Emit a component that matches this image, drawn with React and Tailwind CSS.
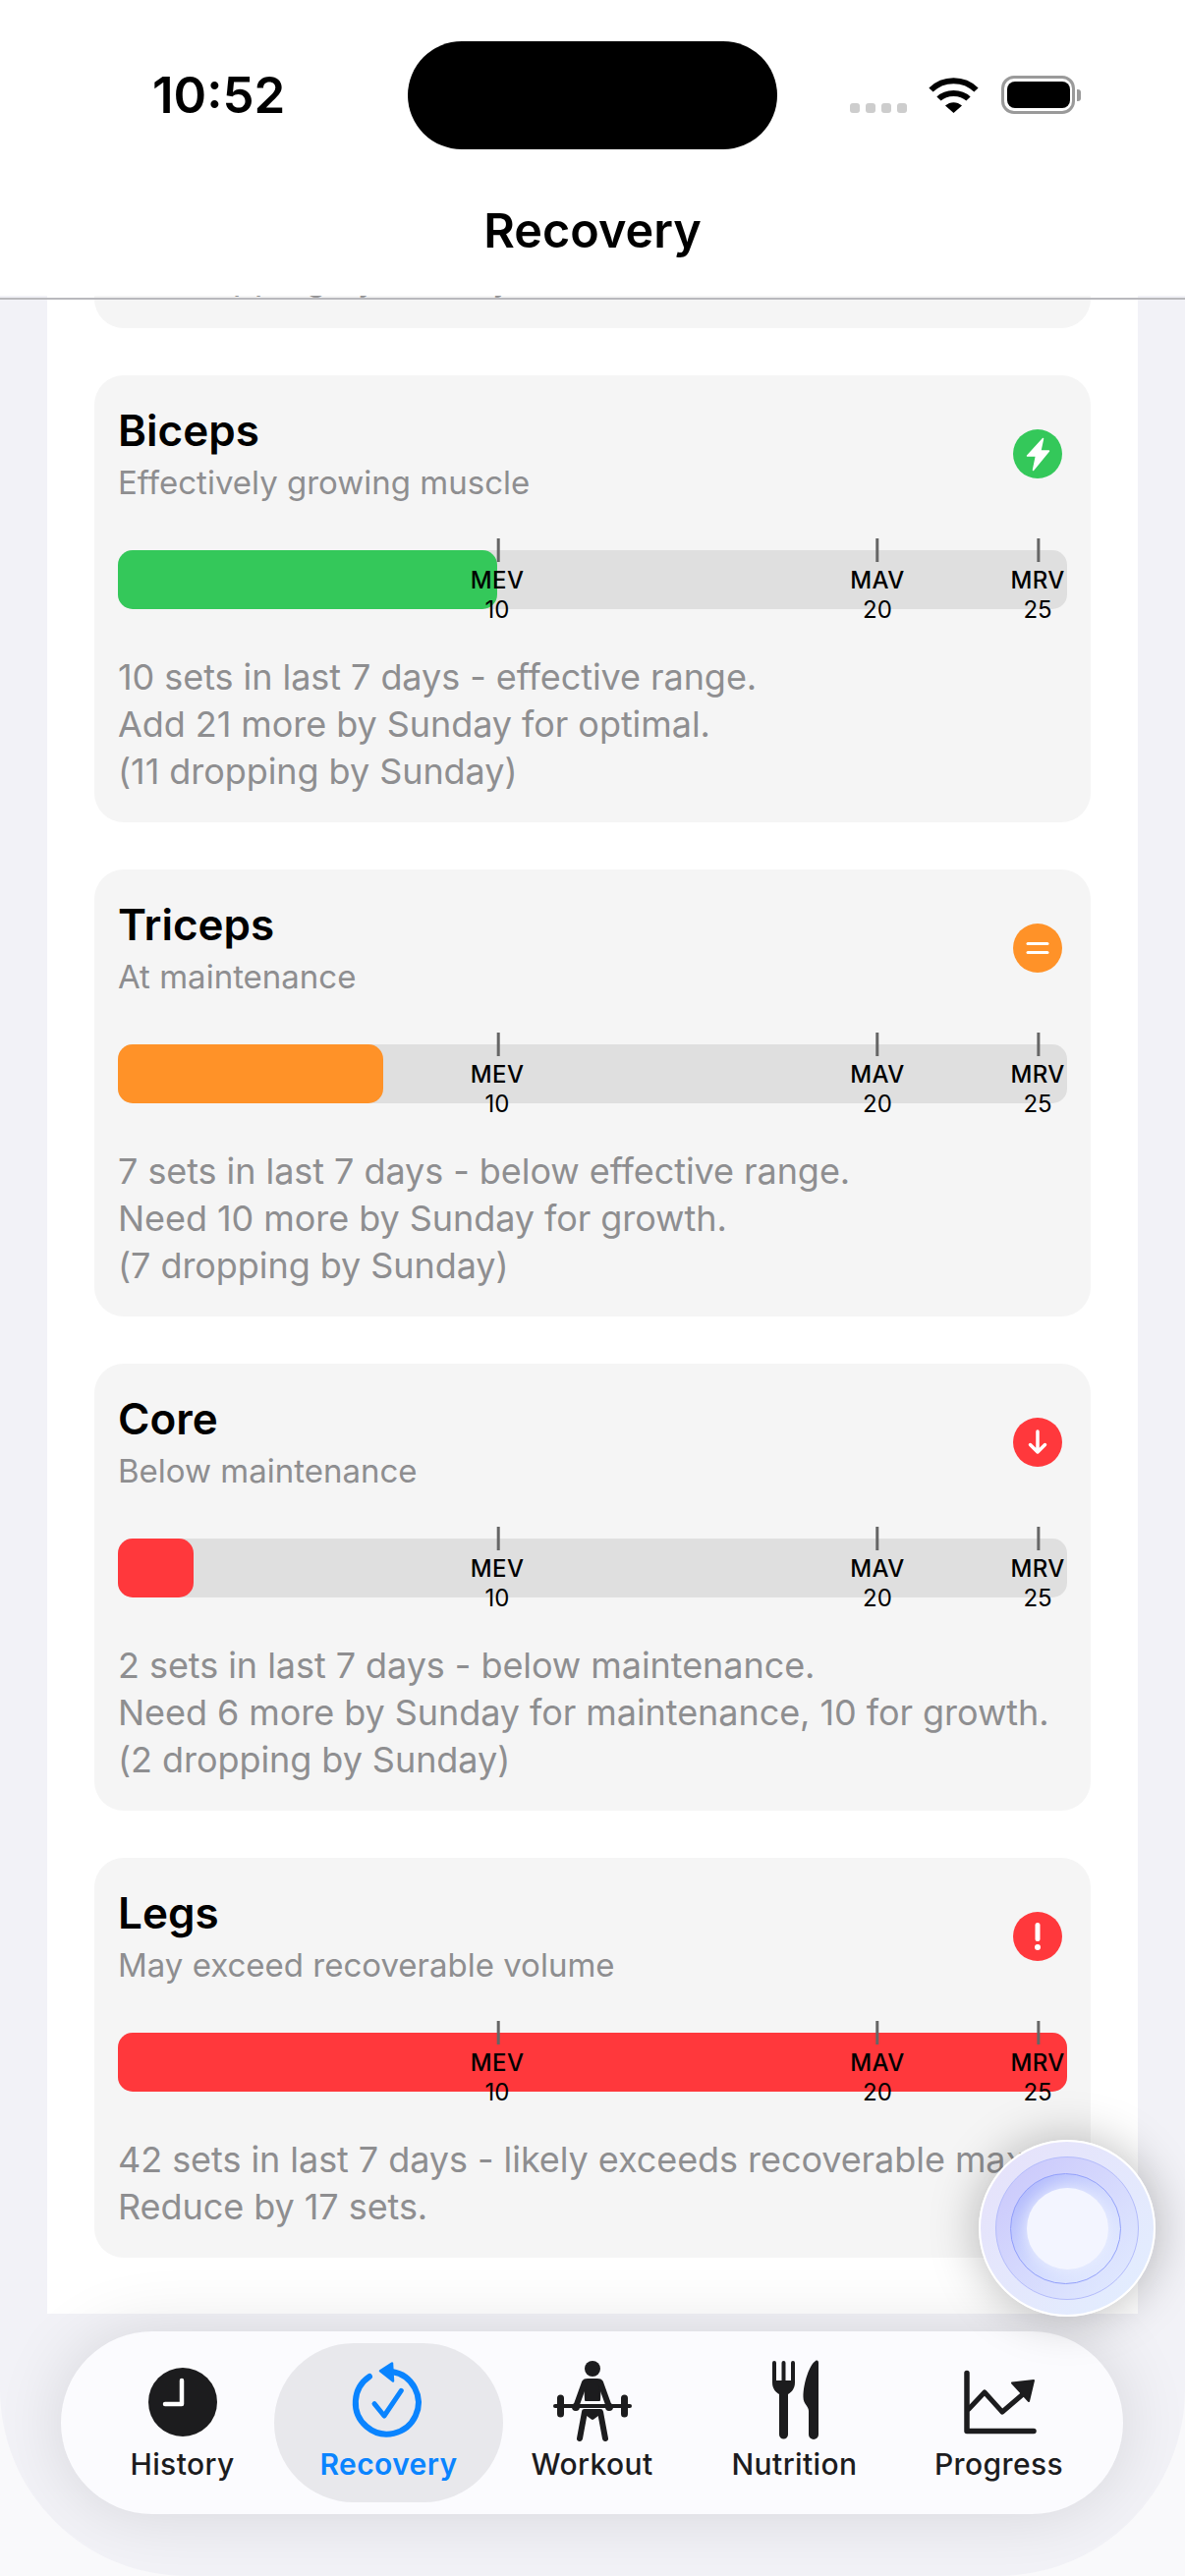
import React from 'react';

const font = 'font-["Inter","Liberation_Sans",sans-serif]';

const muscles = [
  {
    name: 'Shoulders',
    status: 'Effectively growing muscle',
    lines: ['12 sets in last 7 days - effective range.', 'Add 19 more by Sunday for optimal.', '(10 dropping by Sunday)'],
    fill: 'w-[463px] bg-[#34c85a]',
    icon: 'bolt',
    badge: 'bg-[#34c85a]',
  },
  {
    name: 'Biceps',
    status: 'Effectively growing muscle',
    lines: ['10 sets in last 7 days - effective range.', 'Add 21 more by Sunday for optimal.', '(11 dropping by Sunday)'],
    fill: 'w-[386px] bg-[#34c85a]',
    icon: 'bolt',
    badge: 'bg-[#34c85a]',
  },
  {
    name: 'Triceps',
    status: 'At maintenance',
    lines: ['7 sets in last 7 days - below effective range.', 'Need 10 more by Sunday for growth.', '(7 dropping by Sunday)'],
    fill: 'w-[270px] bg-[#ff9228]',
    icon: 'equal',
    badge: 'bg-[#ff9228]',
  },
  {
    name: 'Core',
    status: 'Below maintenance',
    lines: ['2 sets in last 7 days - below maintenance.', 'Need 6 more by Sunday for maintenance, 10 for growth.', '(2 dropping by Sunday)'],
    fill: 'w-[77px] bg-[#ff383c]',
    icon: 'down',
    badge: 'bg-[#ff383c]',
  },
  {
    name: 'Legs',
    status: 'May exceed recoverable volume',
    lines: ['42 sets in last 7 days - likely exceeds recoverable max.', 'Reduce by 17 sets.'],
    fill: 'w-full bg-[#ff383c]',
    icon: 'alert',
    badge: 'bg-[#ff383c]',
  },
];

// MEV and MRV labels sit a little left of their tick
const markers = [
  { label: 'MEV', value: 10, pos: 'left-[386px]', tick: 'translate-x-[1px]' },
  { label: 'MAV', value: 20, pos: 'left-[773px]', tick: '' },
  { label: 'MRV', value: 25, pos: 'left-[936px]', tick: 'translate-x-[1px]' },
];

function BadgeIcon({ type }) {
  return (
    <svg width="50" height="50" viewBox="0 0 50 50" fill="none" stroke="white" strokeLinecap="round" strokeLinejoin="round">
      {type === 'bolt' && <path d="M30.5 9.5 14.5 27h9l-3 14.5L36.5 22h-8.7z" fill="white" strokeWidth="1.5" />}
      {type === 'equal' && (
        <>
          <path d="M15 20.5h20" strokeWidth="3" />
          <path d="M15 29.5h20" strokeWidth="3" />
        </>
      )}
      {type === 'down' && <path d="M25 14v21M17.5 27.5 25 35l7.5-7.5" strokeWidth="3.5" />}
      {type === 'alert' && (
        <>
          <path d="M25 13.5v14" strokeWidth="5" />
          <circle cx="25" cy="36" r="3" fill="white" stroke="none" />
        </>
      )}
    </svg>
  );
}

function MuscleCard({ muscle }) {
  return (
    <div className="rounded-[30px] bg-[#f5f5f5] px-[24px] pt-[29px] pb-[28px]">
      <div className="flex items-start justify-between">
        <div>
          <div className="text-[44px] leading-[54px] font-semibold text-black">{muscle.name}</div>
          <div className="mt-[4px] text-[33px] leading-[44px] text-[#8e8e90]">{muscle.status}</div>
        </div>
        <div className={`mt-[26px] mr-[5px] flex h-[50px] w-[50px] items-center justify-center rounded-full ${muscle.badge}`}>
          <BadgeIcon type={muscle.icon} />
        </div>
      </div>
      <div className="relative mt-[47px] h-[60px] rounded-[15px] bg-[#dfdfdf]">
        <div className={`h-full rounded-[15px] ${muscle.fill}`} />
        {markers.map((m) => (
          <div key={m.label} className={`absolute top-[-12px] flex -translate-x-1/2 flex-col items-center ${m.pos}`}>
            <div className={`h-[24px] w-[3px] bg-[#666] ${m.tick}`} />
            <div className="mt-[4px] text-[24px] leading-[30px] font-medium tracking-[0.4px] text-black">{m.label}</div>
            <div className="text-[24px] leading-[30px] text-black">{m.value}</div>
          </div>
        ))}
      </div>
      <div className="mt-[45px] text-[36px] leading-[48px] tracking-[-0.06px] whitespace-nowrap text-[#8e8e90]">
        {muscle.lines.map((l) => (
          <div key={l}>{l}</div>
        ))}
      </div>
    </div>
  );
}

function ClockIcon() {
  return (
    <svg width="110" height="100" viewBox="0 0 110 100">
      <circle cx="55" cy="50" r="35" fill="#1c1c1e" />
      <path d="M54 28v24H37" fill="none" stroke="white" strokeWidth="4.5" strokeLinecap="round" strokeLinejoin="round" />
    </svg>
  );
}

function RecoveryIcon() {
  return (
    <svg width="110" height="100" viewBox="0 0 110 100" fill="none" stroke="#0a84ff" strokeLinecap="round" strokeLinejoin="round">
      <path d="M58 19A32 32 0 1 1 35 24" strokeWidth="6" />
      <path d="M46 18.3 58 10.5 59 28.5z" fill="#0a84ff" strokeWidth="2.5" />
      <path d="M40 51.7 50 64 67.3 38.3" strokeWidth="5" />
    </svg>
  );
}

function WorkoutIcon() {
  return (
    <svg width="110" height="100" viewBox="0 0 110 100" fill="none" stroke="#1c1c1e" strokeLinecap="round" strokeLinejoin="round">
      <circle cx="55" cy="16" r="8" fill="#1c1c1e" stroke="none" />
      <path d="M47 27.5Q48 27 50 27H60Q62 27 63 27.5L62 48H48z" fill="#1c1c1e" strokeWidth="2" />
      <path d="M47 30 38 55M63 30l9 25" strokeWidth="6" />
      <path d="M44 54H66" stroke="#fbfbff" strokeWidth="10" strokeLinecap="butt" />
      <path d="M17 54H93" strokeWidth="4" />
      <path d="M22.5 46V62M87.5 46V62" strokeWidth="7" />
      <path d="M38 55h0M72 55h0" strokeWidth="8" />
      <path d="M47 60H63L68 87M47 60 42 87" strokeWidth="6" />
      <path d="M47 60H63L55 66z" fill="#1c1c1e" strokeWidth="4" />
    </svg>
  );
}

function NutritionIcon() {
  return (
    <svg width="110" height="100" viewBox="0 0 110 100" fill="#1c1c1e">
      <path d="M32 10a2 2 0 0 1 4 0V28h5.5V10a2 2 0 0 1 4 0V28H51V10a2 2 0 0 1 4 0V30C55 37 51 40 48 42V83a4.5 4.5 0 0 1-9 0V42C36 40 32 37 32 30z" />
      <path d="M79 10V83a5 5 0 0 1-10 0V59C69 54 63.5 52 63.5 45 63.5 30 70 12 76 8 78 7 79 8 79 10z" />
    </svg>
  );
}

function ProgressIcon() {
  return (
    <svg width="110" height="100" viewBox="0 0 110 100" fill="none" stroke="#1c1c1e" strokeLinecap="round" strokeLinejoin="round">
      <path d="M22 20.5V79.5H90" strokeWidth="5.5" />
      <path d="M24 57 40 40 58 60 79 42" strokeWidth="5" />
      <path d="M90 28 68 30.5 85 49z" fill="#1c1c1e" strokeWidth="2" />
    </svg>
  );
}

const tabs = [
  { name: 'History', Icon: ClockIcon, width: 'w-[211px]' },
  { name: 'Recovery', Icon: RecoveryIcon, width: 'w-[209px]', active: true },
  { name: 'Workout', Icon: WorkoutIcon, width: 'w-[205px]' },
  { name: 'Nutrition', Icon: NutritionIcon, width: 'w-[207px]' },
  { name: 'Progress', Icon: ProgressIcon, width: 'w-[209px]' },
];

function TabBar() {
  return (
    <div className="relative flex h-[186px] items-center rounded-[93px] bg-[#fbfbfe] pl-[18px] shadow-[0_0_70px_rgba(0,0,0,0.12)]">
      {tabs.map(({ name, Icon, width, active }) => (
        <div key={name} className={`relative flex h-[162px] flex-col items-center pt-[10px] ${width}`}>
          {active && <div className="absolute inset-y-0 right-[-12px] left-[-12px] rounded-[81px] bg-[#e8e8ec]" />}
          <div className="relative">
            <Icon />
          </div>
          <div className={`relative mt-[-5px] text-[30px] leading-[36px] tracking-[0.4px] ${active ? 'font-semibold text-[#0a84ff]' : 'font-medium text-[#1c1c1e]'}`}>{name}</div>
        </div>
      ))}
    </div>
  );
}

function AssistantBubble() {
  return (
    <div className="absolute top-[2178px] left-[996px] flex h-[180px] w-[180px] items-center justify-center rounded-full border-2 border-white bg-gradient-to-br from-[#e6e1fa] to-[#e2eeff] shadow-[0_0_50px_rgba(0,0,0,0.28)]">
      <div className="flex h-[146px] w-[146px] items-center justify-center rounded-full border border-[#b4bcfb] bg-gradient-to-br from-[#c9c6fb] to-[#e2ecff]">
        <div className="flex h-[113px] w-[113px] -translate-x-[2px] items-center justify-center rounded-full border border-[#8f9dfb] bg-gradient-to-br from-[#a9b0fb] via-[#d0d8fe] to-[#e6eeff]">
          <div className="h-[83px] w-[83px] translate-x-[2px] rounded-full bg-[#f3f5ff] shadow-[0_0_18px_#eef2ff]" />
        </div>
      </div>
    </div>
  );
}

export default function App() {
  return (
    <div className={`relative h-[2622px] w-[1206px] overflow-hidden bg-[#f9f9fb] ${font}`}>
      <div className="flex h-full flex-col overflow-hidden rounded-b-[190px] bg-[#f2f2f7]">
        <header className="h-[301px] shrink-0 bg-white">
          <div className="flex items-center pt-[42px] pl-[155px]">
            <div className="w-[260px] text-[51px] leading-[60px] font-semibold text-black">10:52</div>
            <div className="h-[110px] w-[376px] rounded-[55px] bg-black" />
            <div className="ml-[74px] flex h-[40px] items-end">
              <div className="mb-[2px] flex gap-[6px]">
                <div className="h-[10px] w-[10px] rounded-[3px] bg-[#cdcdcd]" />
                <div className="h-[10px] w-[10px] rounded-[3px] bg-[#cdcdcd]" />
                <div className="h-[10px] w-[10px] rounded-[3px] bg-[#cdcdcd]" />
                <div className="h-[10px] w-[10px] rounded-[3px] bg-[#cdcdcd]" />
              </div>
              <svg className="mb-[2px] ml-[22px]" width="51" height="37" viewBox="0 0 51 37" fill="none" stroke="black" strokeWidth="6">
                <path d="M2.5 13.5C15 1 36 1 48.5 13.5" />
                <path d="M10.5 22.5C18 15 33 15 40.5 22.5" />
                <path d="M17 29.5 25.5 37 34 29.5C29 25 22 25 17 29.5Z" fill="black" stroke="none" />
              </svg>
              <div className="mb-[1px] ml-[23px] flex h-[39px] w-[75px] items-center justify-center rounded-[13px] border-[3px] border-[#9a9a9a]">
                <div className="h-[27px] w-[64px] rounded-[8px] bg-black" />
              </div>
              <div className="mb-[14px] ml-[2px] h-[12px] w-[4px] rounded-r-[3px] bg-[#9a9a9a]" />
            </div>
          </div>
          <div className="mt-[54px] text-center text-[48.5px] leading-[58px] font-semibold text-black">Recovery</div>
        </header>

        <main className="relative min-h-0 flex-1 overflow-hidden px-[48px]">
          <div className="absolute top-[2px] right-0 left-0 z-10 h-[1.5px] bg-[#b9b9bd]" />
          <div className="mt-[-422px] flex h-[2476px] flex-col gap-[48px] bg-white px-[48px]">
            {muscles.map((m) => (
              <MuscleCard key={m.name} muscle={m} />
            ))}
          </div>
        </main>

        <div className="relative h-[267px] shrink-0 pt-[18px] pr-[63px] pl-[62px]">
          <TabBar />
        </div>
      </div>
      <AssistantBubble />
    </div>
  );
}
